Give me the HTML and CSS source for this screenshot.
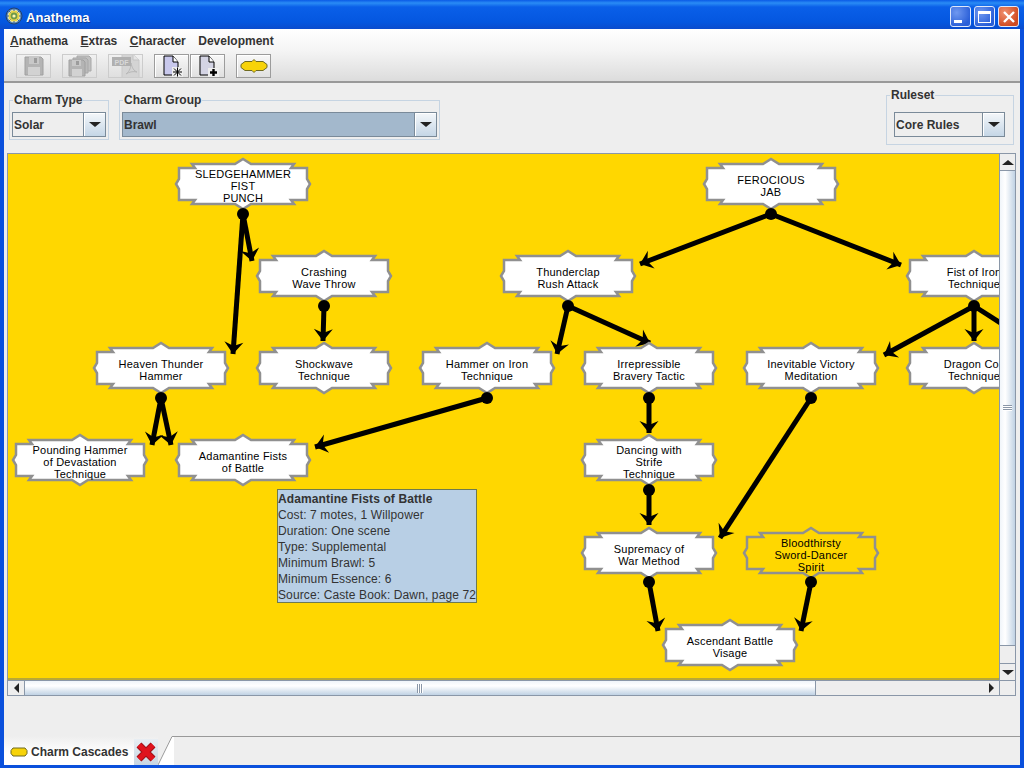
FILE: index.html
```html
<!DOCTYPE html>
<html lang="en">
<head>
<meta charset="utf-8">
<title>Anathema</title>
<link rel="stylesheet" href="styles.css">
</head>
<body>
<div class="window">
  <header class="titlebar">
    <svg class="app-icon" width="18" height="18" viewBox="0 0 18 18">
      <circle cx="9" cy="9" r="8" fill="#4f7fb8" stroke="#20406f"/>
      <circle cx="9" cy="9" r="6" fill="#e8d44a" stroke="#f5efb0"/>
      <circle cx="9" cy="9" r="3.4" fill="#6f9a4a"/>
      <circle cx="9" cy="9" r="1.6" fill="#fff6b0"/>
      <path d="M9 1v3M9 14v3M1 9h3M14 9h3M3.500 3.500l2 2M12.500 12.500l2 2M14.500 3.500l-2 2M5.500 12.500l-2 2" stroke="#2f5f9f" stroke-width="1"/>
    </svg>
    <span class="title">Anathema</span>
    <div class="win-buttons">
      <span class="win-btn"><i class="min-glyph"></i></span>
      <span class="win-btn"><i class="max-glyph"></i></span>
      <span class="win-btn win-close">
        <svg width="14" height="14" viewBox="0 0 14 14"><path d="M2 2l10 10M12 2L2 12" stroke="#fff" stroke-width="2.400"/></svg>
      </span>
    </div>
  </header>

  <div class="chrome">
    <nav class="menubar">
      <span><u>A</u>nathema</span>
      <span><u>E</u>xtras</span>
      <span><u>C</u>haracter</span>
      <span>Development</span>
    </nav>
    <div class="toolbar">
      <button class="tool disabled first">
        <svg width="22" height="22" viewBox="0 0 22 22"><path d="M2 2h16l2 2v16H2z" fill="#b4b4b4" stroke="#a0a0a0"/><rect x="6" y="2" width="10" height="7" fill="#c8c8c8"/><rect x="11" y="3" width="3" height="5" fill="#9c9c9c"/><rect x="5" y="12" width="12" height="8" fill="#d2d2d2"/></svg>
      </button>
      <button class="tool disabled gap-a">
        <svg width="24" height="22" viewBox="0 0 24 22"><path d="M9 1h12l2 2v13H9z" fill="#c0c0c0" stroke="#a8a8a8"/><path d="M5 3h13l2 2v13H5z" fill="#bababa" stroke="#a8a8a8"/><path d="M1 5h14l2 2v14H1z" fill="#b4b4b4" stroke="#a0a0a0"/><rect x="4" y="5" width="9" height="6" fill="#c8c8c8"/><rect x="8" y="6" width="3" height="4" fill="#9c9c9c"/><rect x="4" y="14" width="10" height="7" fill="#d2d2d2"/></svg>
      </button>
      <button class="tool disabled gap-a">
        <svg width="30" height="24" viewBox="0 0 30 24"><path d="M11 0h11l6 6v18H11z" fill="#d4d4d4" stroke="#c8c8c8"/><path d="M22 0v6h6" fill="#e4e4e4" stroke="#c4c4c4"/><path d="M15 20c4-3 5-7 5-11 1 5 3 8 6 9-4-1-8 0-11 2z" fill="none" stroke="#b8b8b8"/><rect x="1" y="3" width="19" height="9" fill="#b0b0b0"/><text x="10.500" y="10.500" class="pdf-text">PDF</text></svg>
      </button>
      <button class="tool gap-a">
        <svg width="22" height="22" viewBox="0 0 22 22"><path d="M3 1h9l5 6v13H3z" fill="#c8c8ec" stroke="#000"/><path d="M12 1v6h5" fill="#fff" stroke="#000"/><rect x="11" y="12" width="11" height="10" fill="#eee"/><path d="M16.500 12.500v9M12 17h9M13 13.500l7 7M20 13.500l-7 7" stroke="#000" stroke-width="1"/></svg>
      </button>
      <button class="tool gap-b">
        <svg width="22" height="22" viewBox="0 0 22 22"><path d="M3 1h9l5 6v13H3z" fill="#d4d4e4" stroke="#000"/><path d="M12 1v6h5" fill="#fff" stroke="#000"/><rect x="11" y="13" width="11" height="9" fill="#eee"/><path d="M16.500 14v7M13 17.500h7" stroke="#000" stroke-width="2.400"/></svg>
      </button>
      <button class="tool gap-c">
        <svg class="charm-icon" width="28" height="14" viewBox="0 0 28 14"><path d="M5 2.500h7l2-2 2 2h7l4 3v3l-4 3h-7l-2 2-2-2H5l-4-3v-3z" fill="#f7d308" stroke="#6f6a20"/></svg>
      </button>
    </div>
  </div>

  <main class="content">
    <section class="filters">
      <fieldset class="box box-type">
        <legend>Charm Type</legend>
        <div class="combo combo-type"><span class="combo-value">Solar</span><span class="combo-arrow"><i></i></span></div>
      </fieldset>
      <fieldset class="box box-group">
        <legend>Charm Group</legend>
        <div class="combo combo-group"><span class="combo-value">Brawl</span><span class="combo-arrow"><i></i></span></div>
      </fieldset>
      <fieldset class="box box-rules">
        <legend>Ruleset</legend>
        <div class="combo combo-rules"><span class="combo-value">Core Rules</span><span class="combo-arrow"><i></i></span></div>
      </fieldset>
    </section>

    <section class="pane">
      <div class="canvas">
        <svg class="diagram" width="991" height="526" viewBox="8 154 991 526">
          <defs>
            <marker id="arrow" markerUnits="userSpaceOnUse" markerWidth="20" markerHeight="26" refX="15" refY="13" orient="auto">
              <path d="M15 13L3 3.500 7 13 3 22.500z" fill="#000"/>
            </marker>
            <path id="node" d="M-67 0l3-5v-11h16l-3-4h43l8-5 8 5h43l-3 4h16v11l3 5-3 5v11h-16l3 4H8l-8 5-8-5h-43l3-4h-16V5z"/>
          </defs>

          <g class="edges">
            <line x1="243" y1="214" x2="233" y2="354"/>
            <line x1="243" y1="214" x2="252" y2="261"/>
            <line x1="771" y1="214" x2="640" y2="264"/>
            <line x1="771" y1="214" x2="901" y2="265"/>
            <line x1="324" y1="306" x2="323" y2="341"/>
            <line x1="568" y1="306" x2="557" y2="354"/>
            <line x1="568" y1="306" x2="650" y2="343"/>
            <line x1="974" y1="306" x2="884" y2="355"/>
            <line x1="974" y1="306" x2="974" y2="341"/>
            <line x1="974" y1="306" x2="1024" y2="338"/>
            <line x1="161" y1="398" x2="152" y2="445"/>
            <line x1="161" y1="398" x2="171" y2="445"/>
            <line x1="487" y1="398" x2="315" y2="447"/>
            <line x1="649" y1="398" x2="649" y2="433"/>
            <line x1="811" y1="398" x2="720" y2="538"/>
            <line x1="649" y1="490" x2="649" y2="525"/>
            <line x1="649" y1="582" x2="658" y2="631"/>
            <line x1="811" y1="582" x2="801" y2="631"/>
          </g>

          <g class="nodes">
            <g transform="translate(243 184)"><use href="#node"/><text y="-6">SLEDGEHAMMER</text><text y="6">FIST</text><text y="18">PUNCH</text></g>
            <g transform="translate(771 184)"><use href="#node"/><text y="0">FEROCIOUS</text><text y="12">JAB</text></g>
            <g transform="translate(324 276)"><use href="#node"/><text y="0">Crashing</text><text y="12">Wave Throw</text></g>
            <g transform="translate(568 276)"><use href="#node"/><text y="0">Thunderclap</text><text y="12">Rush Attack</text></g>
            <g transform="translate(974 276)"><use href="#node"/><text y="0">Fist of Iron</text><text y="12">Technique</text></g>
            <g transform="translate(161 368)"><use href="#node"/><text y="0">Heaven Thunder</text><text y="12">Hammer</text></g>
            <g transform="translate(324 368)"><use href="#node"/><text y="0">Shockwave</text><text y="12">Technique</text></g>
            <g transform="translate(487 368)"><use href="#node"/><text y="0">Hammer on Iron</text><text y="12">Technique</text></g>
            <g transform="translate(649 368)"><use href="#node"/><text y="0">Irrepressible</text><text y="12">Bravery Tactic</text></g>
            <g transform="translate(811 368)"><use href="#node"/><text y="0">Inevitable Victory</text><text y="12">Meditation</text></g>
            <g transform="translate(974 368)"><use href="#node"/><text y="0">Dragon Coil</text><text y="12">Technique</text></g>
            <g transform="translate(80 460)"><use href="#node"/><text y="-6">Pounding Hammer</text><text y="6">of Devastation</text><text y="18">Technique</text></g>
            <g transform="translate(243 460)"><use href="#node"/><text y="0">Adamantine Fists</text><text y="12">of Battle</text></g>
            <g transform="translate(649 460)"><use href="#node"/><text y="-6">Dancing with</text><text y="6">Strife</text><text y="18">Technique</text></g>
            <g transform="translate(649 553)"><use href="#node"/><text y="0">Supremacy of</text><text y="12">War Method</text></g>
            <g class="unlearned" transform="translate(811 553)"><use href="#node"/><text y="-6">Bloodthirsty</text><text y="6">Sword-Dancer</text><text y="18">Spirit</text></g>
            <g transform="translate(730 645)"><use href="#node"/><text y="0">Ascendant Battle</text><text y="12">Visage</text></g>
          </g>

          <g class="dots">
            <circle cx="243" cy="214" r="6"/>
            <circle cx="771" cy="214" r="6"/>
            <circle cx="324" cy="306" r="6"/>
            <circle cx="568" cy="306" r="6"/>
            <circle cx="974" cy="306" r="6"/>
            <circle cx="161" cy="398" r="6"/>
            <circle cx="487" cy="398" r="6"/>
            <circle cx="649" cy="398" r="6"/>
            <circle cx="811" cy="398" r="6"/>
            <circle cx="649" cy="490" r="6"/>
            <circle cx="649" cy="582" r="6"/>
            <circle cx="811" cy="582" r="6"/>
          </g>
        </svg>
        <div class="tooltip">
          <strong>Adamantine Fists of Battle</strong>
          <span>Cost: 7 motes, 1 Willpower</span>
          <span>Duration: One scene</span>
          <span>Type: Supplemental</span>
          <span>Minimum Brawl: 5</span>
          <span>Minimum Essence: 6</span>
          <span>Source: Caste Book: Dawn, page 72</span>
        </div>
      </div>

      <div class="vbar">
        <span class="sb-btn"><i class="tri-up"></i></span>
        <span class="vthumb"><i class="vgrip"></i></span>
        <span class="vtrack"></span>
        <span class="sb-btn"><i class="tri-down"></i></span>
      </div>
      <div class="hbar">
        <span class="sb-btn"><i class="tri-left"></i></span>
        <span class="hthumb"><i class="hgrip"></i></span>
        <span class="htrack"></span>
        <span class="sb-btn"><i class="tri-right"></i></span>
      </div>
      <div class="corner"></div>
    </section>
  </main>

  <footer class="tabbar">
    <div class="tab">
      <svg class="tab-charm" width="18" height="10" viewBox="0 0 18 10"><path d="M3 1h12l2 2.500v3L15 9H3L1 6.500v-3z" fill="#f7d308" stroke="#6f6a20"/></svg>
      <span class="tab-label">Charm Cascades</span>
      <span class="tab-close">
        <svg width="24" height="24" viewBox="0 0 24 24"><path d="M5 5l14 14M19 5L5 19" stroke="#a01018" stroke-width="7"/><path d="M5 5l14 14M19 5L5 19" stroke="#e0141e" stroke-width="5"/></svg>
      </span>
    </div>
    <svg class="tab-slant" width="16" height="29" viewBox="0 0 16 29"><path d="M0 0h14L0 28z" fill="#eeeeee"/><path d="M0 29L14 .5h2" fill="none" stroke="#999"/></svg>
    <div class="tab-rest"></div>
  </footer>
</div>
</body>
</html>
```
FILE: styles.css
```css
* { box-sizing: border-box; }
html, body { margin: 0; padding: 0; overflow: hidden; }
body { font-family: "Liberation Sans", Arial, sans-serif; font-size: 12px; color: #333; }

.window {
  width: 1024px; height: 768px;
  display: flex; flex-direction: column;
  background: #0a50dc;
  padding: 0 4px 3px;
}

/* title bar */
.titlebar {
  flex: none;
  height: 29px; margin: 0 -4px;
  display: flex; align-items: center; padding: 0 5px 0 5px;
  background: linear-gradient(#0a5ae6 0, #2a8cf5 3px, #0a5fe8 7px, #0457e0 22px, #0a4ccd 29px);
}
.app-icon { margin-right: 3px; margin-top: 3px; }
.title { color: #fff; font-weight: bold; font-size: 13px; letter-spacing: .1px; margin-top: 6px; text-shadow: 1px 1px 0 #0a3a9a; }
.win-buttons { margin-left: auto; display: flex; gap: 3px; margin-top: 4px; }
.win-btn {
  width: 21px; height: 21px; border: 1px solid #dfe8fb; border-radius: 3px;
  background: radial-gradient(circle at 30% 30%, #6f98f0, #2a5fd8 75%);
  display: flex; align-items: center; justify-content: center;
}
.win-close { background: radial-gradient(circle at 30% 30%, #f09070, #d04a20 75%); }
.min-glyph { width: 8px; height: 3px; background: #fff; margin: 9px 6px 0 0; }
.max-glyph { width: 13px; height: 12px; border: 1px solid #fff; border-top-width: 3px; }

/* menu + toolbar */
.chrome { flex: none; height: 52px; background: linear-gradient(#ffffff 0, #f4f4f4 22px, #dcdcdc 52px); }
.menubar { height: 22px; display: flex; gap: 12.5px; padding-left: 6px; align-items: center; padding-top: 2px; font-weight: bold; color: #333; }
.toolbar { height: 30px; display: flex; align-items: flex-start; padding: 3px 0 0 12px; }
.tool {
  height: 24px; width: 35px; padding: 0; margin: 0;
  display: flex; align-items: center; justify-content: center;
  background: linear-gradient(#f8f8f8, #e0e0e0);
  border: 1px solid #9c9c9c;
  box-shadow: inset 1px 1px 0 #fff;
  overflow: hidden;
}
.tool.disabled { border-color: #cccccc; background: transparent; box-shadow: none; }
.gap-a { margin-left: 11px; }
.gap-b { margin-left: 1px; }
.gap-c { margin-left: 11px; }
.pdf-text { font: bold 7px "Liberation Sans", sans-serif; fill: #d8d8d8; text-anchor: middle; }

/* content */
.content {
  flex: none; height: 655px; display: flex; flex-direction: column;
  background: #eeeeee;
  border-top: 2px solid #999;
}
.filters { height: 70px; display: flex; align-items: flex-start; padding: 5px 6px 0 5px; flex: none; }
.box { margin: 0; border: 1px solid #c6d4e2; padding: 0 2px 2px; min-width: 0; }
.box legend { padding: 0 1px; margin-left: 1px; font-weight: bold; font-size: 12px; line-height: 14px; color: #333; }
.box-type { width: 100px; margin-top: 5px; }
.box-group { width: 321px; margin: 5px 0 0 10px; }
.box-rules { width: 128px; margin-left: auto; padding: 0 8px 7px 7px; }
.box-rules legend { margin-left: -4px; }
.box-type .combo, .box-group .combo { margin-top: 5px; }
.box-rules .combo { margin-top: 10px; }
.combo {
  height: 25px; display: flex;
  border: 1px solid #7a8a99; background: #eeeeee;
}
.combo-type { width: 94px; }
.combo-group { width: 315px; }
.combo-rules { width: 111px; }
.combo-value { flex: 1; font-weight: bold; padding: 1px 0 0 1px; line-height: 23px; color: #333; border-right: 1px solid #7a8a99; }
.combo-group .combo-value { background: #a3b8cc; }
.combo-arrow {
  width: 21px; display: flex; align-items: center; justify-content: center;
  background: linear-gradient(#f4f7fa, #c5d6e6);
  box-shadow: inset 1px 1px 0 #fff;
}
.combo-arrow i { border: 5px solid transparent; border-top: 5px solid #222; border-left-width: 6px; border-right-width: 6px; border-bottom-width: 0; }

/* scroll pane */
.pane {
  margin: 0 4px 0 3px; flex: none;
  display: grid; grid-template-columns: 991px 16px; grid-template-rows: 526px 15px;
  border: 1px solid #8a97a8;
}
.canvas { background: #ffd700; position: relative; overflow: hidden; box-shadow: inset 0 -2px 0 #b8a838; }
.diagram { display: block; }
.edges line { stroke: #000; stroke-width: 5; marker-end: url(#arrow); }
.nodes use { fill: #fff; stroke: #909090; stroke-width: 2.500; }
.nodes text { font: 11px "Liberation Sans", Arial, sans-serif; fill: #000; text-anchor: middle; letter-spacing: .22px; }
.nodes .unlearned use { fill: #ffd700; }
.dots circle { fill: #000; }

.tooltip {
  position: absolute; left: 269px; top: 335px;
  width: 200px; height: 114px; padding: 1px 0 0;
  display: flex; flex-direction: column;
  background: #b8cfe5; border: 1px solid #6e7a50;
  line-height: 16px; color: #333; white-space: nowrap; letter-spacing: .12px;
}

.vbar { display: flex; flex-direction: column; background: #eee; border-left: 1px solid #8a97a8; }
.vbar .sb-btn { height: 16px; width: 15px; }
.vthumb { height: 476px; flex: none; display: flex; align-items: center; justify-content: center; background: linear-gradient(90deg, #f0f5fa, #ffffff 35%, #c0d2e4); border-top: 1px solid #8a97a8; border-bottom: 1px solid #8a97a8; }
.vtrack { flex: 1; border-bottom: 1px solid #8a97a8; }
.vgrip { width: 9px; height: 6px; background: repeating-linear-gradient(#8a97a8 0 1px, #fff 1px 2px); }
.hbar { display: flex; background: #eee; border-top: 1px solid #8a97a8; }
.hbar .sb-btn { width: 16px; height: 14px; }
.hthumb { width: 792px; display: flex; align-items: center; justify-content: center; background: linear-gradient(#f0f5fa, #ffffff 35%, #c0d2e4); border-left: 1px solid #8a97a8; border-right: 1px solid #8a97a8; }
.hgrip { width: 6px; height: 9px; background: repeating-linear-gradient(90deg, #8a97a8 0 1px, #fff 1px 2px); }
.htrack { flex: 1; }
.sb-btn { display: flex; align-items: center; justify-content: center; background: #eee; flex: none; }
.tri-up { border: 6px solid transparent; border-top: 0; border-bottom: 5px solid #222; }
.tri-down { border: 6px solid transparent; border-bottom: 0; border-top: 5px solid #222; }
.tri-left { border: 5px solid transparent; border-left: 0; border-right: 5px solid #222; }
.tri-right { border: 5px solid transparent; border-right: 0; border-left: 5px solid #222; }
.corner { background: #eee; border-top: 1px solid #8a97a8; border-left: 1px solid #8a97a8; }

/* tabs */
.tabbar { flex: none; height: 29px; display: flex; background: #eeeeee; }
.tab {
  width: 154px; display: flex; align-items: center;
  background: linear-gradient(#eeeeee, #ffffff 60%);
  padding: 2px 0 0 6px;
}
.tab-charm { margin-right: 3px; }
.tab-label { font-weight: bold; color: #333; white-space: nowrap; }
.tab-close { margin-left: auto; width: 24px; height: 26px; display: flex; align-items: center; justify-content: center; background: linear-gradient(#e8eef3, #c8d6e2); }
.tab-slant { flex: none; background: #fff; display: block; }
.tab-rest { flex: 1; border-top: 1px solid #999; }
```
